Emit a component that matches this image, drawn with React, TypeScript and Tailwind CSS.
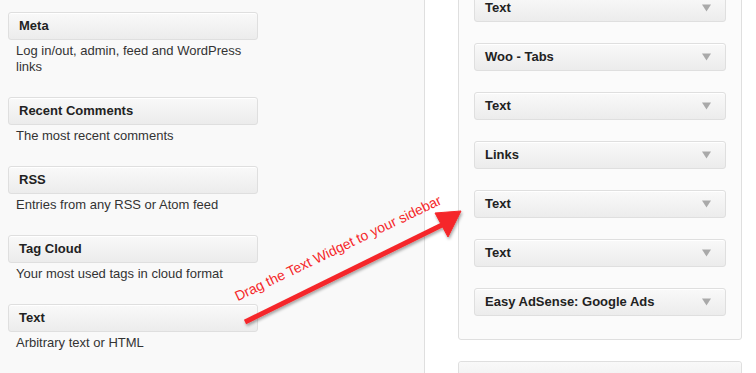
import React from 'react';

const available = [
  { title: 'Meta', desc: 'Log in/out, admin, feed and WordPress links' },
  { title: 'Recent Comments', desc: 'The most recent comments' },
  { title: 'RSS', desc: 'Entries from any RSS or Atom feed' },
  { title: 'Tag Cloud', desc: 'Your most used tags in cloud format' },
  { title: 'Text', desc: 'Arbitrary text or HTML' },
];

const sidebar = ['Text', 'Woo - Tabs', 'Text', 'Links', 'Text', 'Text', 'Easy AdSense: Google Ads'];

const box =
  'h-[28px] rounded-[3px] border border-[#dfdfdf] bg-gradient-to-b from-[#f9f9f9] to-[#ececec] shadow-[inset_0_1px_0_#fff] flex items-center px-[10px] text-[13px] font-bold text-[#222]';

function Caret() {
  return (
    <svg width="9" height="8" viewBox="0 0 9 8" className="ml-auto mr-[4px]">
      <path d="M0 0.5 H9 L4.5 7.5 Z" fill="#a9a9a9" />
    </svg>
  );
}

export default function App() {
  return (
    <div
      className="relative flex h-[373px] w-[756px] overflow-hidden bg-white"
      style={{ fontFamily: '"Liberation Sans", Arial, sans-serif' }}
    >
      <div className="w-[425px] shrink-0 border-r border-[#dfdfdf] bg-[#f9f9f9] pl-[8px] pt-[12px]">
        <div className="flex w-[250px] flex-col gap-[22px]">
          {available.map((w, i) => (
            <div key={i}>
              <div className={box}>{w.title}</div>
              <p className="mt-[3px] pl-[8px] text-[13px] leading-[16px] text-[#333]">{w.desc}</p>
            </div>
          ))}
        </div>
      </div>

      <div className="flex-1 pl-[33px] pr-[14px]">
        <div className="-mt-[22px] rounded-[3px] border border-[#dfdfdf] bg-[#fbfbfb] px-[15px] pb-[23px] pt-[15px]">
          <div className="flex flex-col gap-[21px]">
            {sidebar.map((t, i) => (
              <div key={i} className={box}>
                <span>{t}</span>
                <Caret />
              </div>
            ))}
          </div>
        </div>
        <div className="mt-[21px] rounded-[3px] border border-[#dfdfdf] bg-[#fbfbfb]">
          <div className="h-[28px] rounded-t-[3px] bg-gradient-to-b from-[#f9f9f9] to-[#ececec] px-[10px] pt-[6px] text-[13px] font-bold text-[#222]">
            Search
          </div>
        </div>
      </div>

      {/* annotation overlay */}
      <svg className="pointer-events-none absolute left-0 top-0" width="756" height="373">
        <defs>
          <filter id="sh" x="-20%" y="-20%" width="140%" height="140%">
            <feDropShadow dx="1" dy="2" stdDeviation="1.5" floodColor="#000" floodOpacity="0.35" />
          </filter>
        </defs>
        <g filter="url(#sh)" fill="#f5282a" stroke="#f5282a">
          <line x1="245" y1="322" x2="444" y2="224" strokeWidth="5" strokeLinecap="butt" />
          <path d="M461 211 L435 213 L448 237 Z" strokeWidth="1" strokeLinejoin="round" />
        </g>
      </svg>
      <div
        className="pointer-events-none absolute left-[338px] top-[248px] whitespace-nowrap text-[14px] leading-none text-[#f5282a]"
        style={{ transform: 'translate(-50%, -50%) rotate(-25.5deg)' }}
      >
        Drag the Text Widget to your sidebar
      </div>
    </div>
  );
}
